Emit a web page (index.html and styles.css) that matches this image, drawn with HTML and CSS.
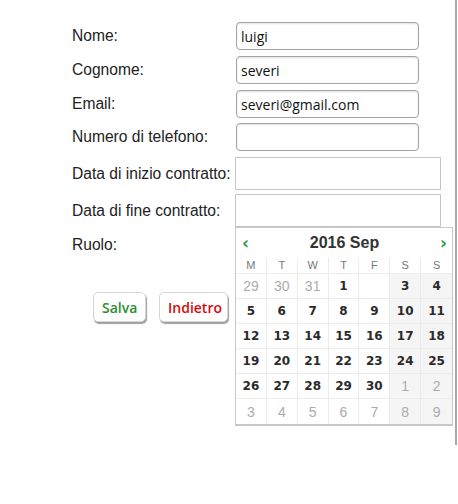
FILE: index.html
```html
<!DOCTYPE html>
<html lang="it">
<head>
<meta charset="utf-8">
<title>Dipendente</title>
<link rel="stylesheet" href="styles.css">
</head>
<body>
<div class="page">
  <form class="form">
    <div class="row">
      <label class="label">Nome:</label>
      <input class="text" type="text" value="luigi">
    </div>
    <div class="row">
      <label class="label">Cognome:</label>
      <input class="text" type="text" value="severi">
    </div>
    <div class="row">
      <label class="label">Email:</label>
      <input class="text" type="text" value="severi@gmail.com">
    </div>
    <div class="row row-tel">
      <label class="label">Numero di telefono:</label>
      <input class="text" type="text" value="">
    </div>
    <div class="row row-date">
      <label class="label">Data di inizio contratto:</label>
      <input class="date" type="text" value="">
    </div>
    <div class="row row-date row-fine">
      <label class="label">Data di fine contratto:</label>
      <div class="date-wrap">
        <input class="date" type="text" value="">
        <div class="calendar">
          <div class="cal-head">
            <span class="nav">&#8249;</span>
            <span class="cal-title">2016 Sep</span>
            <span class="nav">&#8250;</span>
          </div>
          <div class="cal-grid">
            <div class="dow">M</div><div class="dow">T</div><div class="dow">W</div><div class="dow">T</div><div class="dow">F</div><div class="dow">S</div><div class="dow">S</div>

            <div class="day other">29</div><div class="day other">30</div><div class="day other">31</div><div class="day">1</div><div class="day blank"></div><div class="day we">3</div><div class="day we">4</div>

            <div class="day">5</div><div class="day">6</div><div class="day">7</div><div class="day">8</div><div class="day">9</div><div class="day we">10</div><div class="day we">11</div>

            <div class="day">12</div><div class="day">13</div><div class="day">14</div><div class="day">15</div><div class="day">16</div><div class="day we">17</div><div class="day we">18</div>

            <div class="day">19</div><div class="day">20</div><div class="day">21</div><div class="day">22</div><div class="day">23</div><div class="day we">24</div><div class="day we">25</div>

            <div class="day">26</div><div class="day">27</div><div class="day">28</div><div class="day">29</div><div class="day">30</div><div class="day we other">1</div><div class="day we other">2</div>

            <div class="day other">3</div><div class="day other">4</div><div class="day other">5</div><div class="day other">6</div><div class="day other">7</div><div class="day we other">8</div><div class="day we other">9</div>
          </div>
        </div>
      </div>
    </div>
    <div class="row row-ruolo">
      <label class="label">Ruolo:</label>
    </div>
    <div class="buttons">
      <button type="button" class="btn btn-save">Salva</button>
      <button type="button" class="btn btn-back">Indietro</button>
    </div>
  </form>
</div>
</body>
</html>
```

FILE: styles.css
```css
html, body {
  margin: 0;
  padding: 0;
  background: #ffffff;
}

.page {
  width: 457px;
  height: 445px;
  border-right: 2px solid #a8a8a8;
  box-sizing: border-box;
}

.form {
  padding: 22px 0 0 72px;
  display: flex;
  flex-direction: column;
  gap: 6px;
}

.row {
  display: flex;
  align-items: center;
  height: 28px;
}

.row-tel {
  margin-top: -1px;
}

.row-date {
  height: 33px;
}

.row-fine {
  margin-top: -2px;
}

.row-ruolo {
  height: 28px;
  margin-top: -2px;
}

.label {
  width: 163px;
  flex: none;
  font-family: "Liberation Sans", Arial, sans-serif;
  font-size: 15.6px;
  color: #222;
}

.text {
  box-sizing: border-box;
  width: 183px;
  height: 28px;
  margin: 0 0 0 1px;
  padding: 0 4px;
  border: 1px solid #a4a4a4;
  border-radius: 4px;
  box-shadow: inset 0 1px 2px rgba(0,0,0,0.12);
  font-family: "Open Sans", "DejaVu Sans", sans-serif;
  font-size: 14px;
  color: #111;
  background: #fff;
  outline: none;
}

.date-wrap {
  position: relative;
}

.date {
  display: block;
  box-sizing: border-box;
  width: 206px;
  height: 33px;
  margin: 0;
  padding: 0 4px;
  border: 1px solid #c4c4c4;
  border-radius: 0;
  background: #fff;
  outline: none;
}

.calendar {
  position: absolute;
  left: 0;
  top: 33px;
  width: 218px;
  box-sizing: border-box;
  background: #fff;
  border: 1px solid #c8c8c8;
  border-bottom: 2px solid #c8c8c8;
  z-index: 5;
}

.cal-head {
  height: 30px;
  display: flex;
  align-items: center;
  justify-content: space-between;
  padding: 0 5px 0 6px;
}

.nav {
  color: #1f9a2f;
  font-family: "DejaVu Sans", sans-serif;
  font-weight: bold;
  font-size: 17px;
  line-height: 1;
}

.cal-title {
  font-family: "Liberation Sans", Arial, sans-serif;
  font-weight: bold;
  font-size: 16px;
  color: #333;
}

.cal-grid {
  display: grid;
  grid-template-columns: repeat(7, 1fr);
}

.dow {
  height: 15px;
  line-height: 15px;
  text-align: center;
  font-family: "Liberation Sans", Arial, sans-serif;
  font-size: 11px;
  color: #777;
  border-right: 1px solid #ececec;
  border-bottom: 1px solid #ececec;
}

.dow:nth-child(7n) {
  border-right: none;
}

.day {
  height: 25px;
  box-sizing: border-box;
  display: flex;
  align-items: center;
  justify-content: center;
  font-family: "DejaVu Sans", sans-serif;
  font-weight: bold;
  font-size: 12px;
  color: #2a2a2a;
  border-right: 1px solid #ececec;
  border-bottom: 1px solid #ececec;
}

.day:nth-child(7n) {
  border-right: none;
}

.day.we {
  background: #f5f5f5;
}

.day.other {
  font-family: "Liberation Sans", Arial, sans-serif;
  font-weight: normal;
  font-size: 14px;
  color: #ababab;
}

.day:nth-last-child(-n+7) {
  border-bottom: none;
}

.buttons {
  display: flex;
  gap: 13px;
  padding-left: 21px;
  margin-top: 27px;
}

.btn {
  height: 30px;
  padding: 0 8px;
  background: #fff;
  border: 1px solid #d6d6d6;
  border-radius: 5px;
  box-shadow: 1px 2px 1px #a0a0a0;
  font-family: "Open Sans", sans-serif;
  font-weight: 600;
  font-size: 14px;
  cursor: pointer;
}

.btn-save {
  width: 53px;
  color: #2b8f2b;
}

.btn-back {
  width: 69px;
  color: #d40a0a;
}
```
